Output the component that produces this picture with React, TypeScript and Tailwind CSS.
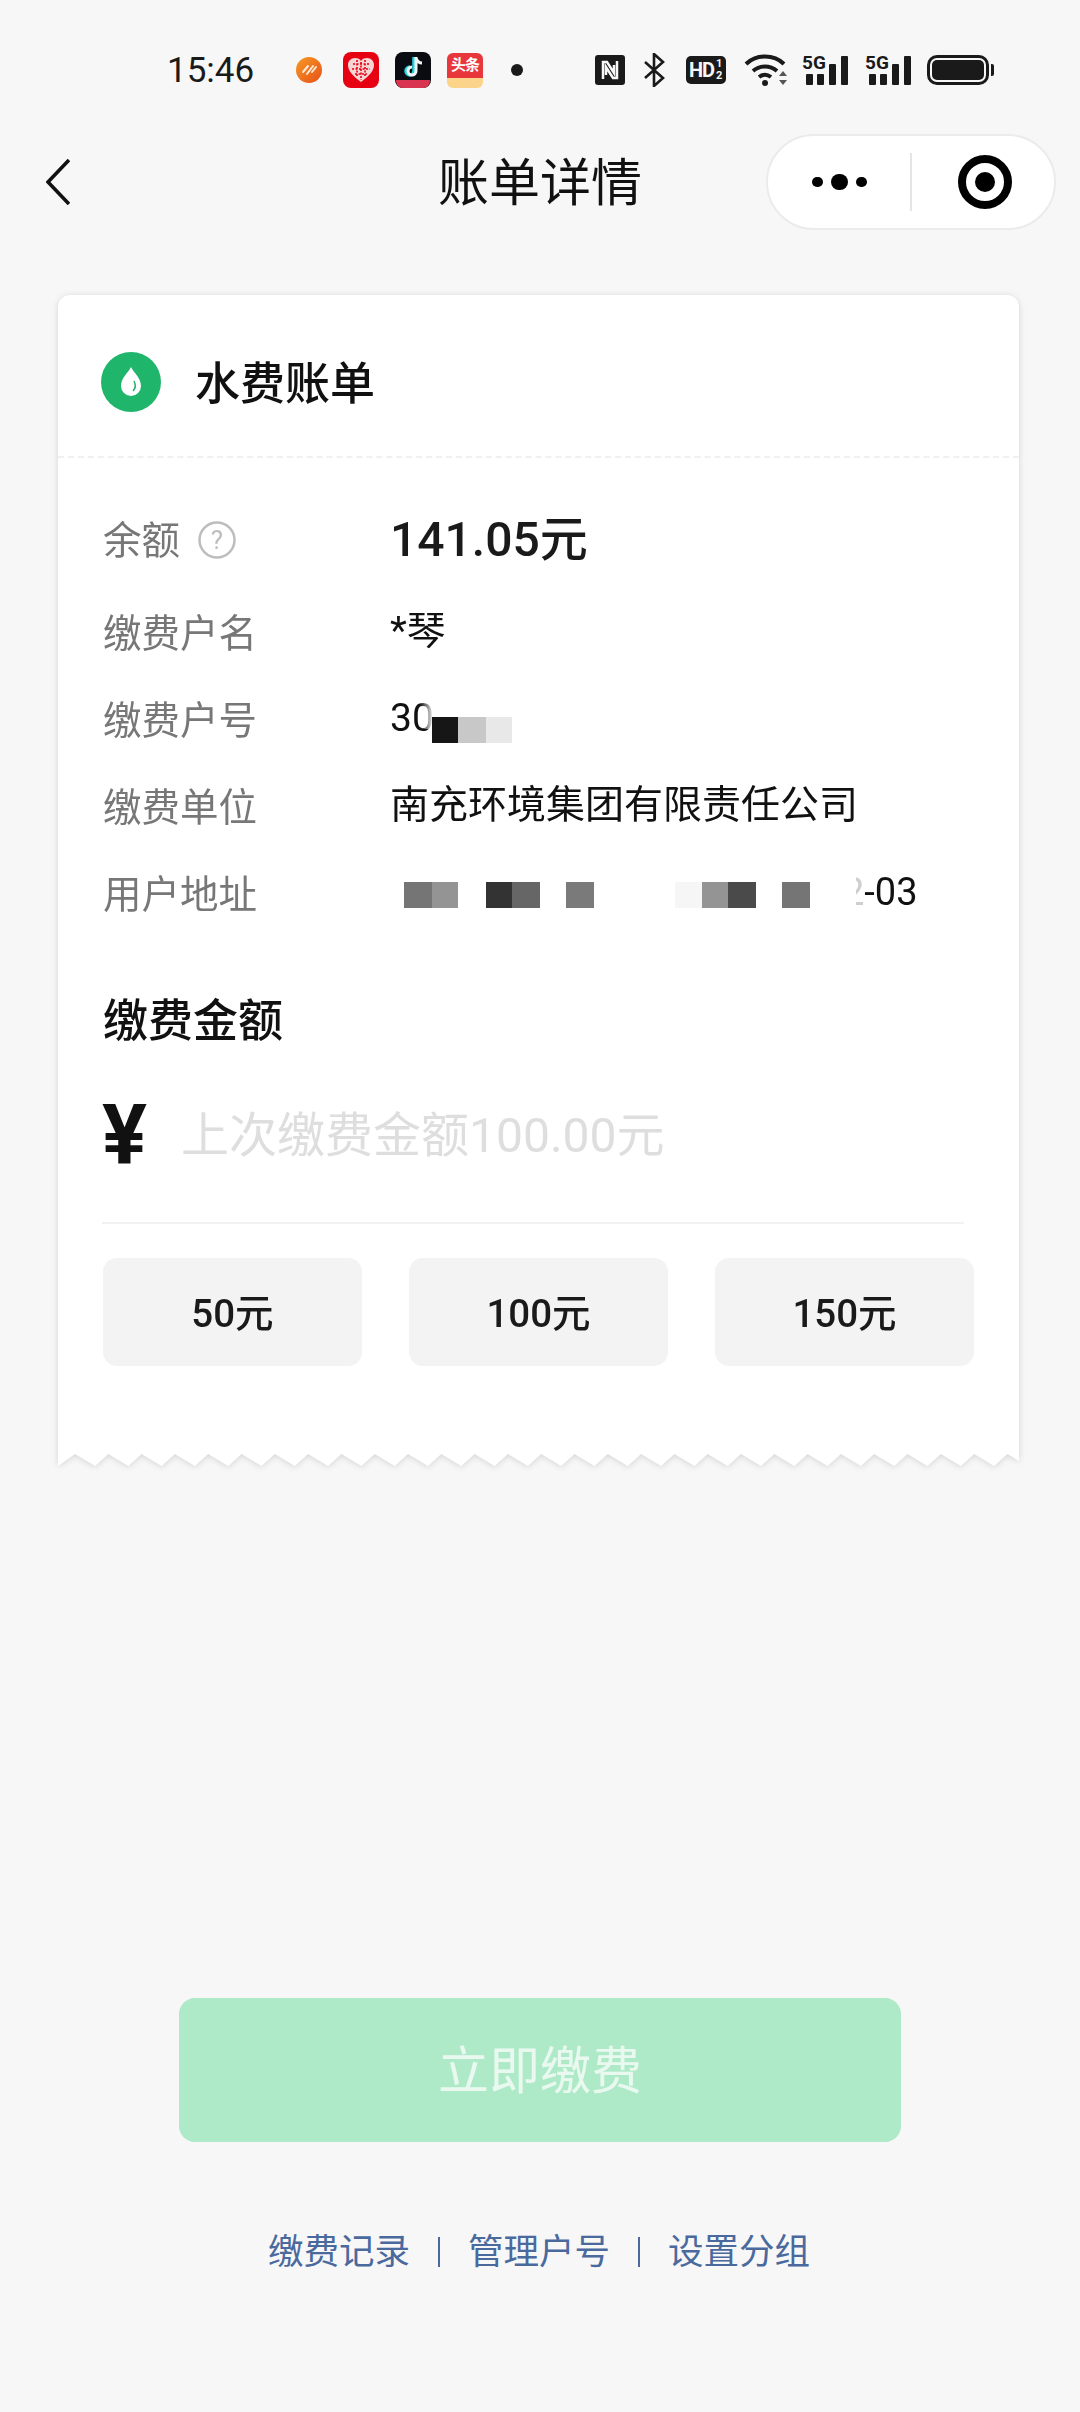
const font = "font-['Roboto','Noto_Sans_CJK_SC',sans-serif]";

const rows = [
  { label: "缴费户名", value: "*琴" },
  { label: "缴费户号", value: "30" },
  { label: "缴费单位", value: "南充环境集团有限责任公司" },
];

// blurred out part of the address, [width, colour]
const addressBlocks: [number, string][] = [
  [28, "#757575"],
  [26, "#949494"],
  [28, "transparent"],
  [26, "#333333"],
  [28, "#666666"],
  [26, "transparent"],
  [28, "#7a7a7a"],
  [81, "transparent"],
  [27, "#f6f6f6"],
  [26, "#949494"],
  [28, "#4a4a4a"],
  [26, "transparent"],
  [28, "#757575"],
];

const zigzag = () => {
  const points = ["0,0", "961,0", "961,13"];
  for (let i = 28; i >= 0; i--) {
    points.push(`${37 + i * 33.3},13`);
    points.push(`${17 + i * 33.3},1`);
  }
  points.push("0,13");
  return points.join(" ");
};

const Signal = () => (
  <svg width="46" height="32" viewBox="0 0 46 32" className="ml-[13px] overflow-visible">
    <text x="0" y="15" fontSize="19" fontWeight="700" fontFamily="Roboto" fill="#1a1a1a">5G</text>
    <rect x="4" y="20" width="7" height="11" rx="1" fill="#1a1a1a" />
    <rect x="15" y="20" width="7" height="11" rx="1" fill="#1a1a1a" />
    <rect x="27" y="10" width="7" height="21" rx="1" fill="#1a1a1a" />
    <rect x="39" y="2" width="7" height="29" rx="1" fill="#1a1a1a" />
  </svg>
);

const StatusBar = () => (
  <div className="h-[140px] flex items-center pl-[167px]">
    <span className="w-[86px] text-[35px] leading-none text-[#1a1a1a]">15:46</span>
    <svg width="26" height="26" viewBox="0 0 26 26" className="ml-[43px]">
      <defs>
        <linearGradient id="orange" x1="0" y1="0" x2="1" y2="1">
          <stop offset="0" stopColor="#f59a23" />
          <stop offset="1" stopColor="#e8501a" />
        </linearGradient>
      </defs>
      <circle cx="13" cy="13" r="13" fill="url(#orange)" />
      <path d="M7 15l5-6M11 17l6-8M16 15l4-5" stroke="#ffe9d6" strokeWidth="2" strokeLinecap="round" />
    </svg>
    <svg width="36" height="36" viewBox="0 0 36 36" className="ml-[21px]">
      <rect width="36" height="36" rx="8" fill="#e60012" />
      <path d="M18 30C10 24 5 19 5 13c0-4 3-7 7-7 3 0 5 1 6 3 1-2 3-3 6-3 4 0 7 3 7 7 0 6-5 11-13 17z" fill="#f8d5d5" />
      <path d="M10 12h16M9 17h18M12 22h12M14 8v17M22 8v17M18 10v18" stroke="#e60012" strokeWidth="1.6" strokeDasharray="2 1.5" />
    </svg>
    <svg width="36" height="36" viewBox="0 0 36 36" className="ml-[16px]">
      <rect width="36" height="36" rx="8" fill="#0b0b12" />
      <path d="M19 5v14a4 4 0 1 1-4-4" fill="none" stroke="#25d8e0" strokeWidth="3.5" />
      <path d="M21 5v14a4 4 0 1 1-4-4M21 6c1 3 3 5 6 5" fill="none" stroke="#f4f4f4" strokeWidth="3" />
      <path d="M1 28h34v1a7 7 0 0 1-7 7H8a7 7 0 0 1-7-7z" fill="#d8344f" />
    </svg>
    <div className="ml-[16px] w-[36px] h-[35px] flex flex-col rounded-[6px] overflow-hidden">
      <div className="h-[25px] bg-[#e8373c] text-white text-[15px] leading-[25px] font-bold text-center tracking-[-1px]">头条</div>
      <div className="h-[10px] bg-[#fbd48a]" />
    </div>
    <div className="ml-[28px] w-[12px] h-[12px] rounded-full bg-[#1a1a1a]" />

    <svg width="30" height="30" viewBox="0 0 30 30" className="ml-[72px]">
      <rect width="30" height="30" rx="3" fill="#1a1a1a" />
      <path d="M8 24V7h4l7 11V10M22 6v17h-4l-7-11v8" fill="none" stroke="#f7f7f7" strokeWidth="2.5" />
    </svg>
    <svg width="21" height="34" viewBox="0 0 21 34" className="ml-[19px]">
      <path d="M1 9l18 16-9 8V1l9 8L1 25" fill="none" stroke="#1a1a1a" strokeWidth="2.6" />
    </svg>
    <div className="ml-[21px] w-[40px] h-[28px] rounded-[5px] bg-[#1a1a1a] flex items-center justify-center gap-[1px] text-[#f7f7f7] font-bold">
      <span className="text-[20px] leading-none tracking-[-1px]">HD</span>
      <span className="text-[11px] leading-[12px] w-[8px] text-center">1<br />2</span>
    </div>
    <svg width="45" height="32" viewBox="0 0 45 32" className="ml-[18px]">
      <path d="M2 10c10-10 28-10 38 0M9 17c7-6 17-6 24 0M15 23c4-3 8-3 12 0" fill="none" stroke="#1a1a1a" strokeWidth="4" />
      <circle cx="21" cy="29" r="3" fill="#1a1a1a" />
      <path d="M35 22l4-5 4 5zM35 26h8l-4 5z" fill="#555555" />
    </svg>
    <Signal />
    <div className="ml-[4px]">
      <Signal />
    </div>
    <div className="ml-[16px] flex items-center gap-[2px]">
      <div className="w-[62px] h-[30px] rounded-[10px] border-[3px] border-[#1a1a1a] p-[2px]">
        <div className="w-full h-full rounded-[5px] bg-[#1a1a1a]" />
      </div>
      <div className="w-[3px] h-[12px] rounded-r-[2px] bg-[#1a1a1a]" />
    </div>
  </div>
);

const NavBar = () => (
  <div className="h-[94px] grid grid-cols-[1fr_auto_1fr] items-center">
    <div className="pl-[46px]">
      <svg width="24" height="46" viewBox="0 0 24 46" className="block">
        <path d="M23 1L2 23l21 22" fill="none" stroke="#111111" strokeWidth="3.6" />
      </svg>
    </div>
    <h1 className="pt-[3px] text-[51px] leading-none text-[#111111]">账单详情</h1>
    <div className="flex justify-end pr-[24px]">
      <div className="w-[290px] h-[96px] -my-[1px] rounded-[48px] border-2 border-[#ebebeb] bg-white flex items-center">
        <div className="w-[142px] flex items-center justify-center gap-[8px]">
          <div className="w-[11px] h-[10px] rounded-full bg-black" />
          <div className="w-[17px] h-[16px] rounded-full bg-black" />
          <div className="w-[11px] h-[10px] rounded-full bg-black" />
        </div>
        <div className="w-[2px] h-[58px] bg-[#e5e5e5]" />
        <div className="ml-[46px] w-[54px] h-[54px] rounded-full border-[8px] border-black flex items-center justify-center">
          <div className="w-[20px] h-[20px] rounded-full bg-black" />
        </div>
      </div>
    </div>
  </div>
);

const BillCard = () => (
  <div className="ml-[58px] mt-[66px] w-[961px] drop-shadow-[0_1px_3px_rgba(0,0,0,0.14)]">
    <div className="bg-white rounded-t-[12px] pb-[87px]">
      <div className="h-[163px] pt-[12px] pl-[43px] flex items-center gap-[34px] border-b-2 border-dashed border-[#f0f0f0]">
        <div className="w-[60px] h-[60px] rounded-full bg-[#1fb56b] flex items-center justify-center">
          <svg width="24" height="32" viewBox="0 0 24 32">
            <path d="M12 1c3 6 10 11 10 19a10 10 0 0 1-20 0C2 12 9 7 12 1z" fill="white" />
            <path d="M15 15c2 4 2 7-1 10" fill="none" stroke="#1fb56b" strokeWidth="1.5" />
          </svg>
        </div>
        <span className="pt-[5px] text-[45px] leading-none font-medium text-[#111111]">水费账单</span>
      </div>

      <div className="pl-[45px] pt-[38px]">
        <div className="h-[87px] mb-[5px] flex items-center">
          <div className="w-[287px] flex items-center text-[38.5px] text-[#777777]">
            <span className="pt-[3px]">余额</span>
            <svg width="38" height="38" viewBox="0 0 38 38" className="ml-[18px]">
              <circle cx="19" cy="19" r="17.5" fill="none" stroke="#bdbdbd" strokeWidth="2.5" />
              <text x="19" y="28" textAnchor="middle" fontSize="26" fontFamily="Roboto" fill="#bdbdbd">?</text>
            </svg>
          </div>
          <span className="text-[48px] font-medium text-[#1a1a1a] leading-none">141.05元</span>
        </div>

        {rows.map((row) => (
          <div key={row.label} className="h-[87px] flex items-center">
            <span className="w-[287px] pt-[5px] text-[38.5px] text-[#777777]">{row.label}</span>
            <div className="relative text-[39px] leading-none text-[#111111]">
              {row.value}
              {row.value === "30" && (
                <>
                  <div className="absolute left-[30px] top-0 w-[14px] h-[30px] bg-gradient-to-r from-transparent to-white" />
                  <div className="absolute left-[42px] top-[18px] flex h-[26px]">
                    <div className="w-[26px] bg-[#161616]" />
                    <div className="w-[28px] bg-[#c8c8c8]" />
                    <div className="w-[26px] bg-[#e8e8e8]" />
                  </div>
                </>
              )}
            </div>
          </div>
        ))}

        <div className="h-[87px] flex items-center">
          <span className="w-[287px] pt-[5px] text-[38.5px] text-[#777777]">用户地址</span>
          <div className="flex items-center pl-[14px]">
            <div className="flex h-[26px] mt-[4px]">
              {addressBlocks.map(([width, colour], i) => (
                <div key={i} style={{ width, backgroundColor: colour }} />
              ))}
            </div>
            <div className="relative ml-[33px] text-[38px] leading-none text-[#cfcfcf] -mt-[2px]">
              2
              <div className="absolute left-0 top-0 w-[13px] h-full bg-white" />
            </div>
            <span className="text-[38px] leading-none text-[#111111] -mt-[2px]">-03</span>
          </div>
        </div>

        <h2 className="mt-[53px] h-[60px] pt-[6px] flex items-center text-[45px] font-medium text-[#111111]">缴费金额</h2>

        <div className="h-[175px] w-[862px] -ml-[1px] flex items-center border-b-2 border-[#f2f2f2]">
          <span className="w-[79px] text-[84px] leading-none font-bold text-[#111111]">¥</span>
          <span className="text-[48px] leading-none text-[#dedede]">上次缴费金额100.00元</span>
        </div>

        <div className="mt-[34px] flex gap-[47px]">
          {["50元", "100元", "150元"].map((amount) => (
            <div key={amount} className="w-[259px] h-[108px] pt-[3px] rounded-[14px] bg-[#f3f3f3] flex items-center justify-center text-[38.5px] font-medium text-[#1a1a1a]">
              {amount}
            </div>
          ))}
        </div>
      </div>
    </div>
    <svg width="961" height="13" viewBox="0 0 961 13" className="block">
      <polygon points={zigzag()} fill="white" />
    </svg>
  </div>
);

const Footer = () => (
  <div className="mt-[532px] flex flex-col items-center">
    <button className="w-[722px] h-[144px] pt-[5px] rounded-[16px] bg-[#aeeac8] text-[51px] text-[#eaf9f0]">立即缴费</button>
    <div className="mt-[85px] -ml-[2px] h-[50px] flex items-center text-[35.5px] text-[#4a6a9e]">
      <span className="pt-[2px]">缴费记录</span>
      <div className="mx-[28px] w-[2px] h-[30px] bg-[#4a6a9e]" />
      <span className="pt-[2px]">管理户号</span>
      <div className="mx-[28px] w-[2px] h-[30px] bg-[#4a6a9e]" />
      <span className="pt-[2px]">设置分组</span>
    </div>
  </div>
);

const App = () => {
  return (
    <div className={`${font} w-[1080px] h-[2412px] bg-[#f7f7f7] overflow-hidden`}>
      <StatusBar />
      <div className="-mt-[5px]">
        <NavBar />
      </div>
      <BillCard />
      <Footer />
    </div>
  );
};

export default App;
